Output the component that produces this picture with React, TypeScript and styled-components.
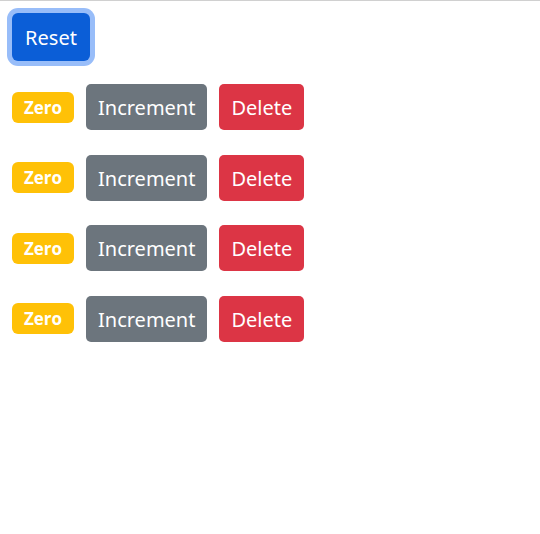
import styled, { createGlobalStyle } from "styled-components";

const GlobalStyle = createGlobalStyle`
    html, body {
        margin: 0;
        padding: 0;
        background: #ffffff;
    }
    body {
        border-top: 1px solid #d0d0d0;
        font-family: "Noto Sans", "Open Sans", sans-serif;
    }
`;

const counters = [0, 0, 0, 0];

export default function App() {
    return (
        <>
            <GlobalStyle />
            <Page>
                <ResetButton>Reset</ResetButton>
                <CounterList>
                    {counters.map((value, i) => (
                        <CounterRow key={i}>
                            <Badge>{value === 0 ? "Zero" : value}</Badge>
                            <Button $variant="secondary">Increment</Button>
                            <Button $variant="danger">Delete</Button>
                        </CounterRow>
                    ))}
                </CounterList>
            </Page>
        </>
    );
}

const Page = styled.div`
    display: flex;
    flex-direction: column;
    align-items: flex-start;
    gap: 23px;
    padding: 11px 12px;
`;

const BaseButton = styled.button`
    font-family: "Noto Sans", "Open Sans", sans-serif;
    font-size: 20px;
    line-height: 1;
    color: #ffffff;
    border: none;
    border-radius: 5px;
    height: 46px;
    padding: 2px 12px 0;
    cursor: pointer;
`;

const ResetButton = styled(BaseButton)`
    background: #0b5ed7;
    height: 48px;
    width: 78px;
    padding: 2px 0 0;
    box-shadow: 0 0 0 5px #98bdf9;
    border-radius: 6px;
    margin-top: 1px;
`;

const Button = styled(BaseButton)<{ $variant: "secondary" | "danger" }>`
    background: ${({ $variant }) =>
        $variant === "danger" ? "#dc3545" : "#6c757d"};
`;

const CounterList = styled.div`
    display: flex;
    flex-direction: column;
    gap: 24.5px;
`;

const CounterRow = styled.div`
    display: flex;
    align-items: center;
    gap: 12px;
`;

const Badge = styled.span`
    display: inline-flex;
    align-items: center;
    justify-content: center;
    width: 62px;
    height: 31px;
    background: #ffc107;
    color: #ffffff;
    font-family: "Open Sans", "Noto Sans", sans-serif;
    font-weight: 700;
    font-size: 17px;
    border-radius: 6px;
`;
